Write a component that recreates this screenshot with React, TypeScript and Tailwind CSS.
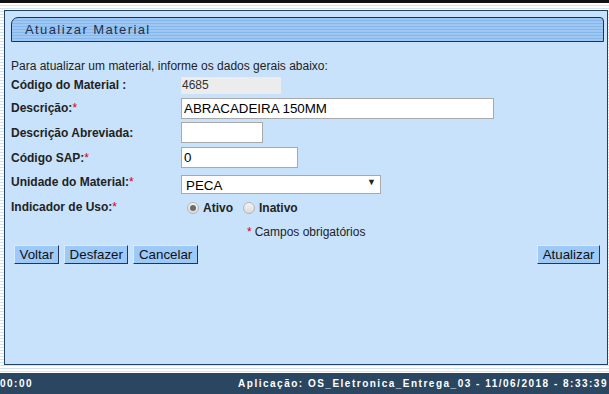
import React, { useState } from 'react';

const labelCls = 'font-bold text-[12px] text-[#222]';

const Req = () => <span className="text-[#d40000] font-normal">*</span>;

const Radio: React.FC<{ checked: boolean; onClick: () => void }> = ({ checked, onClick }) => (
  <span
    onClick={onClick}
    className="inline-flex h-[12px] w-[12px] items-center justify-center rounded-full border border-[#b4b4b4] bg-[linear-gradient(180deg,#f4f4f4,#dcdcdc)] cursor-pointer"
  >
    {checked && <span className="h-[6px] w-[6px] rounded-full bg-[#6b6b6b]" />}
  </span>
);

const Btn: React.FC<{ label: string; className?: string }> = ({ label, className = '' }) => (
  <button
    className={
      'h-[19px] px-[4.5px] text-[13.33px] leading-none text-[#111] bg-[#9cc9f8] border border-t-[#d8ebff] border-l-[#d8ebff] border-b-[#1e3756] border-r-[#1e3756] ' +
      className
    }
  >
    {label}
  </button>
);

const App: React.FC = () => {
  const [uso, setUso] = useState<'ativo' | 'inativo'>('ativo');

  return (
    <div
      className="flex h-[394px] w-[609px] flex-col overflow-hidden bg-[repeating-linear-gradient(180deg,#ffffff_0_2px,#d3e2f1_2px_3px)]"
      style={{ fontFamily: 'Arial, "Liberation Sans", sans-serif' }}
    >
      <div className="h-[3px] bg-[#111]" />
      <div className="h-[7px]" />

      <div className="ml-[4px] mr-[1px] h-[355px] border border-[#22405f] bg-[#c9e2fb]">
        <div className="ml-[6px] mr-[3px] mt-[6px] flex h-[25px] items-center rounded-tl-[7px] rounded-tr-[4px] border border-[#1c3350] bg-[repeating-linear-gradient(180deg,#9ec8f3_0_2px,#86b7ea_2px_3px)] pl-[13px]">
          <span className="text-[13px] tracking-[1.4px] text-[#1d3050]">Atualizar Material</span>
        </div>

        <div className="mt-[16px] px-[6px]">
          <div className="flex h-[16px] items-center text-[12px] text-[#222]">
            Para atualizar um material, informe os dados gerais abaixo:
          </div>

          <div className="grid grid-cols-[170px_1fr]">
            <div className={'flex h-[22px] items-center ' + labelCls}>Código do Material :</div>
            <div className="flex h-[22px] items-center">
              <div className="flex h-[17px] w-[100px] items-center bg-[#ececec] pl-[1px] text-[12px] text-[#333]">4685</div>
            </div>

            <div className={'flex h-[24px] items-center ' + labelCls}>
              Descrição:<Req />
            </div>
            <div className="flex h-[24px] items-center">
              <input
                defaultValue="ABRACADEIRA 150MM"
                className="h-[21px] w-[313px] border border-[#a9a9a9] bg-white px-[2px] text-[13.33px] text-black outline-none"
              />
            </div>

            <div className={'flex h-[25px] items-center ' + labelCls}>Descrição Abreviada:</div>
            <div className="flex h-[25px] items-center">
              <input className="h-[21px] w-[82px] border border-[#a9a9a9] bg-white px-[2px] text-[13.33px] outline-none" />
            </div>

            <div className={'flex h-[25px] items-center ' + labelCls}>
              Código SAP:<Req />
            </div>
            <div className="flex h-[25px] items-center">
              <input
                defaultValue="0"
                className="h-[21px] w-[117px] border border-[#a9a9a9] bg-white px-[2px] text-[13.33px] text-black outline-none"
              />
            </div>

            <div className={'flex h-[24px] items-center ' + labelCls}>
              Unidade do Material:<Req />
            </div>
            <div className="flex h-[24px] items-center">
              <div className="relative h-[19px] w-[200px]">
                <select className="h-full w-full appearance-none border border-[#a9a9a9] bg-white pl-[4px] text-[13.33px] text-black outline-none">
                  <option>PECA</option>
                  <option>METRO</option>
                  <option>UNIDADE</option>
                </select>
                <span className="pointer-events-none absolute right-[5px] top-[3px] text-[9px] text-[#222]">▼</span>
              </div>
            </div>

            <div className={'h-[27px] pt-[4px] ' + labelCls}>
              Indicador de Uso:<Req />
            </div>
            <div className="flex h-[27px] items-center gap-[4px] pl-[6px] text-[12px] font-bold text-[#222]">
              <Radio checked={uso === 'ativo'} onClick={() => setUso('ativo')} />
              <span className="mr-[6px]">Ativo</span>
              <Radio checked={uso === 'inativo'} onClick={() => setUso('inativo')} />
              <span>Inativo</span>
            </div>
          </div>

          <div className="flex h-[22px] items-center pl-[236px] text-[12px] text-[#222]">
            <span className="mr-[3px] text-[#d40000]">*</span>Campos obrigatórios
          </div>

          <div className="mt-[2px] flex items-center pl-[3px] pr-[1px]">
            <div className="flex gap-[5px]">
              <Btn label="Voltar" />
              <Btn label="Desfazer" />
              <Btn label="Cancelar" />
            </div>
            <Btn label="Atualizar" className="ml-auto" />
          </div>
        </div>
      </div>

      <div className="h-[8px]" />
      <div className="flex h-[21px] items-start justify-between bg-[#2b4660] pt-[3px] text-[10px] font-bold tracking-[1.5px] text-white">
        <span>00:00</span>
        <span className="mr-[1px]">Aplicação: OS_Eletronica_Entrega_03 - 11/06/2018 - 8:33:39</span>
      </div>
    </div>
  );
};

export default App;
